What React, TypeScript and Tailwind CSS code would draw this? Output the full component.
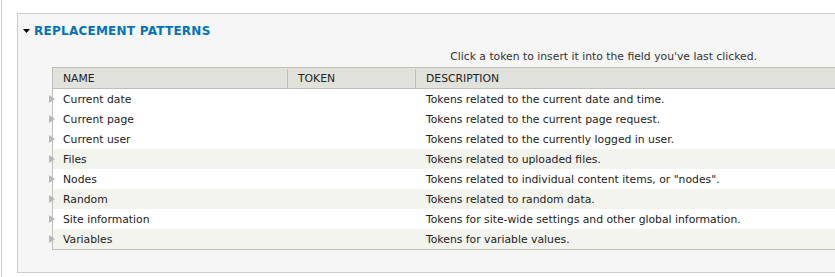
const rows = [
  { name: "Current date", desc: "Tokens related to the current date and time.", striped: false },
  { name: "Current page", desc: "Tokens related to the current page request.", striped: false },
  { name: "Current user", desc: "Tokens related to the currently logged in user.", striped: false },
  { name: "Files", desc: "Tokens related to uploaded files.", striped: true },
  { name: "Nodes", desc: 'Tokens related to individual content items, or "nodes".', striped: false },
  { name: "Random", desc: "Tokens related to random data.", striped: true },
  { name: "Site information", desc: "Tokens for site-wide settings and other global information.", striped: false },
  { name: "Variables", desc: "Tokens for variable values.", striped: true },
];

function Expander() {
  return (
    <svg
      width="6"
      height="8"
      viewBox="0 0 6 8"
      className="absolute left-[-4px] top-[6px]"
    >
      <polygon points="0,0 6,4 0,8" fill="#b7b7b7" />
    </svg>
  );
}

export default function App() {
  return (
    <div className="h-[277px] w-[835px] overflow-hidden bg-white pl-px font-['DejaVu_Sans',sans-serif] text-[10.8px] text-[#222]">
      <div className="h-full border-l border-[#cccccc] pl-[15px] pt-[13px]">
        <div className="h-[260px] w-[900px] border border-[#cccccc] bg-[#f6f6f6]">
          <div className="mt-[9px] flex h-[16px] items-center pl-[5px]">
            <svg width="7" height="4" viewBox="0 0 7 4" className="mr-[4px]">
              <polygon points="0,0 7,0 3.5,4" fill="#000" />
            </svg>
            <span className="text-[12px] font-bold leading-none tracking-[0.25px] text-[#0074bd]">
              REPLACEMENT PATTERNS
            </span>
          </div>

          <div className="ml-[34px] mt-[11px] w-[705px] text-right leading-[14px] text-[#333]">
            Click a token to insert it into the field you've last clicked.
          </div>

          <div className="ml-[34px] mt-[3px] w-[800px] border border-[#bebfb9]">
            <div className="flex h-[21px] border-b border-[#bebfb9] bg-[#e1e2dc] pt-px leading-[19px]">
              <div className="w-[235px] border-r border-[#bebfb9] pl-[10px]">NAME</div>
              <div className="w-[128px] border-r border-[#bebfb9] pl-[10px]">TOKEN</div>
              <div className="flex-1 pl-[10px]">DESCRIPTION</div>
            </div>
            {rows.map((row) => (
              <div
                key={row.name}
                className={`relative flex h-[20px] pt-px leading-[19px] ${row.striped ? "bg-[#f3f4ee]" : "bg-white"}`}
              >
                <Expander />
                <div className="w-[235px] pl-[10px]">{row.name}</div>
                <div className="w-[128px]" />
                <div className="flex-1 pl-[10px]">{row.desc}</div>
              </div>
            ))}
          </div>
        </div>
      </div>
    </div>
  );
}
